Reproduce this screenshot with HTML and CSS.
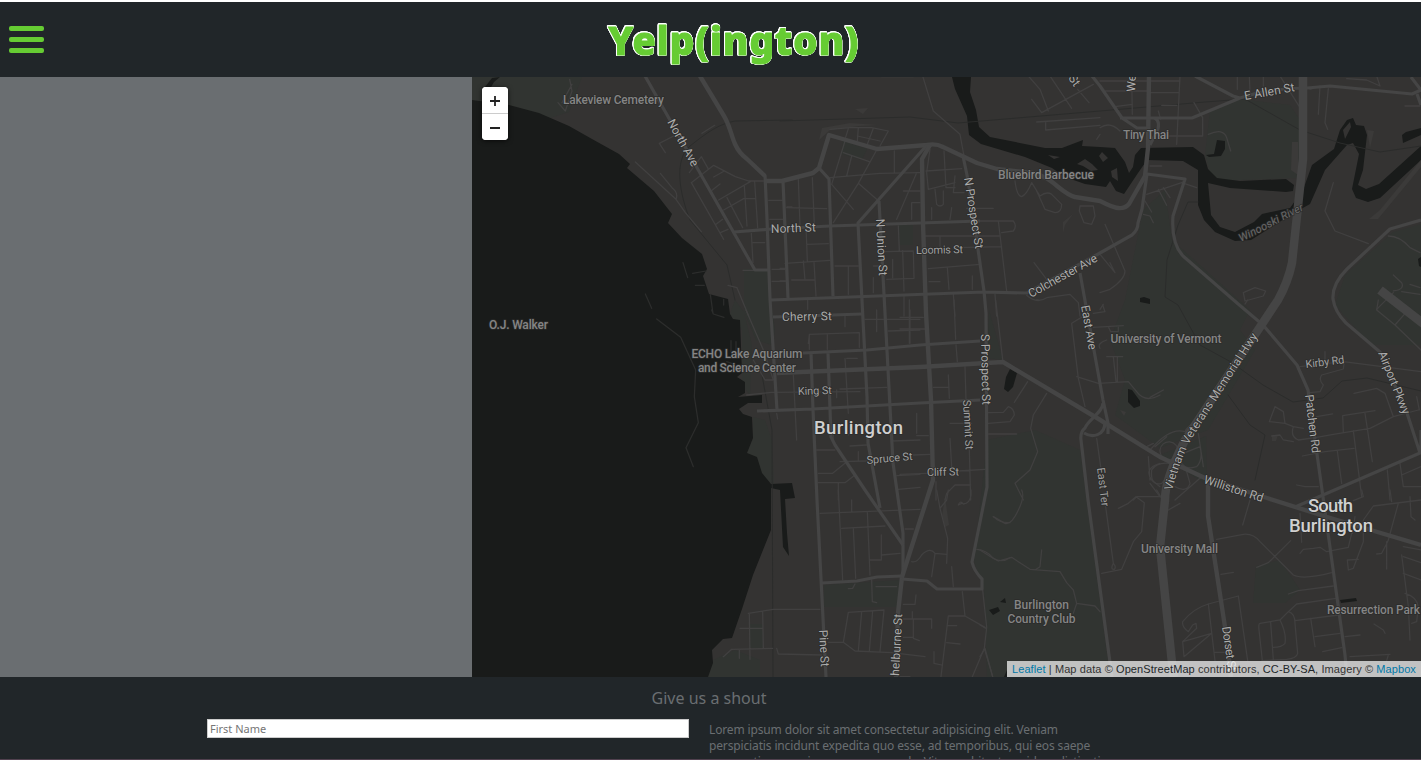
FILE: index.html
```
<!DOCTYPE html>
<html lang="en">
<head>
<meta charset="utf-8">
<title>Yelp(ington)</title>
<link rel="stylesheet" href="styles.css">
</head>
<body>
<header class="topbar">
  <button class="menu" aria-label="Menu"><span></span><span></span><span></span></button>
  <svg class="logo" viewBox="0 0 270 60" role="img"><text x="8.5" y="41" textLength="250" lengthAdjust="spacing">Yelp(ington)</text></svg>
</header>
<main class="content">
  <aside class="results"></aside>
  <section class="map">
    <svg class="tiles" viewBox="472 77 949 600">
      <defs><path id="hwy-label" d="M1172 491C1177 472 1184 450 1196 432L1262 330"/></defs>
      <rect class="land" x="472" y="77" width="949" height="600"/>
      <g class="park">
        <path d="M472 77H582L569 112 550 118 509 105 472 102ZM744 269H769L771 300 775 330 772 345 756 340 744 312ZM735 300L744 312 752 345 750 395 742 385 742 330 730 314ZM753 417L765 420 772 440 774 484 760 478 747 453 753 438Z"/>
        <path d="M1210 110L1238 99 1290 105 1300 120 1298 178 1212 181 1205 155ZM1143 210L1165 190 1172 240 1250 310 1240 330 1255 350 1208 430 1160 448 1115 415 1125 380 1110 340 1125 300Z"/>
        <path d="M987 440L1035 430 1080 450 1110 677H987L984 590 974 562ZM989 310L1003 360 987 358ZM824 585L900 580 897 607H824ZM1256 566L1280 560 1300 590 1285 603H1253ZM1345 275L1393 232 1421 224V345H1370L1335 305ZM1160 455L1206 436 1207 485ZM843 141L867 149 862 160 841 154ZM898 225H913V245H900ZM749 624H763V648H750ZM708 677L713 660 735 650 760 660V677Z"/>
      </g>
      <g class="water">
        <path d="M472 100L509 105 539 113 569 126 592 139 619 154 630 164 627 168 654 191 672 214 668 223 682 238 702 254 707 269 703 276 709 294 728 299 730 314 733 319 740 320 742 373 737 377 745 382 745 393 738 397 762 395 762 403 748 403 739 409 743 414 752 417 753 438 747 453 757 457 762 473 771 484V530L753 575 742 609 732 638 723 639 712 650 713 663 708 677H472Z"/>
        <path d="M771 484L792 483 795 498 785 499 787 533 789 556 783 547 780 490 771 488ZM485 87L492 78 500 77 494 82 490 89Z"/>
        <path d="M952 77H971L970 92 976 110 979 127 990 137 1045 148 1062 148 1083 140 1082 146 1100 147 1115 148 1125 162 1129 173 1133 167 1135 155 1141 148 1193 147 1204 155 1208 169 1217 178 1240 181 1286 179 1294 185 1293 191 1286 192 1230 188 1208 183 1211 215 1220 227 1235 232 1254 222 1262 214 1290 208 1303 190 1312 165 1334 149 1340 130 1347 120 1353 118 1356 125 1364 126 1367 135 1363 170 1358 185 1366 189 1379 184 1421 146V160L1380 198 1368 202 1356 198 1352 189 1359 154 1353 143 1347 145 1325 170 1310 204 1292 214 1251 240 1235 241 1215 232 1204 220 1198 205V170L1183 161 1147 160 1138 173 1124 194 1116 191 1110 181 1106 187 1085 184 1065 177 1052 168 1025 157 981 144 969 135 967 116 955 89Z"/>
        <path d="M1206 155L1214 154 1217 140 1225 141 1225 149 1221 156 1209 157ZM1402 135L1406 132 1421 128V135L1403 143ZM1140 298L1144 297 1150 299 1150 304 1140 302ZM1006 377L1010 369 1017 373 1013 387 1008 392 1004 389ZM1128 389L1132 390 1140 401 1140 406 1134 408 1128 402ZM989 610L998 607 1000 611 993 615ZM1000 602L1005 598 1006 603ZM1340 600L1356 598 1357 601 1341 603ZM1004 677L1007 670V677ZM1421 257L1418 259 1419 266 1421 267Z"/>
      </g>
      <g class="island"><path d="M1048 155L1060 157 1054 159ZM1077 164L1085 159 1092 164 1098 170 1091 171 1083 166ZM1343 130L1350 122 1351 127 1345 139ZM1102 152L1108 158 1103 162 1099 156ZM1111 171L1117 168 1118 181 1112 177Z"/></g>
      <g class="block"><path d="M1380 210L1421 160V167L1378 219 1369 219ZM1292 142H1298V175L1291 170ZM819 140L822 128 850 123 878 125 859 126 830 130ZM855 109L868 108 863 114ZM945 497L949 525 945 527 942 516ZM1120 410L1126 412 1124 416ZM1063 222L1073 214 1065 225 1063 233ZM1367 130L1374 131 1370 148ZM1272 435H1278L1276 441H1272Z"/></g>
      <g class="trace">
        <path d="M780 121L910 117 958 123 1100 111 1205 102 1245 99 1300 130 1340 143 1380 152 1421 146M690 146C710 130 720 124 735 121L792 120M690 146C673 160 680 195 690 220L727 265 735 300M762 375L772 430 773 677M1198 202L1188 202 1178 225 1167 260 1165 297 1178 305 1200 345 1220 356 1231 362 1263 385 1293 402 1323 398 1342 381 1367 378 1421 391M1228 395L1250 425 1265 435 1255 480"/>
      </g>
      <!-- Residential streets, one group per district, drawn on a 3x grid -->
      <g class="minor" transform="translate(472 76) scale(.33333)">
        <path d="M293 10L300 45 280 105 258 80M300 25L270 80M490 258L612 370Q620 350 600 335L565 292M612 370L640 410 688 467M605 180L562 202 580 230M658 320L755 490M658 320L725 268 790 302 830 315H875M652 290L688 242 708 277M725 303L757 285M720 343L744 324M740 372L835 317M755 402L815 368M765 365L812 455M690 172L728 148M817 330L825 450M848 318L857 455M815 368H850M732 445L752 430M745 470L768 460M838 472L843 560M843 500H878M813 583H850M768 628L795 635 830 720M890 373H930M893 430H935M900 580H938M900 616H940M945 393H960"/>
      </g>
      <g class="minor" transform="translate(780 76) scale(.33333)">
        <path d="M428 0L460 105 540 175 552 240M150 160L210 155 275 155 325 165 300 210M205 158L195 190M235 155L232 195M280 157L262 205M232 180L300 195M195 195L155 325 220 400M190 230L268 257M215 240L200 300M290 222L235 322 160 440M235 322L290 370M343 225V290M150 305L300 292 420 290M410 290L350 430M55 310L60 450M97 305L103 447M20 395L140 398M78 450L82 555M82 505L145 503M15 562L150 553M70 555L75 612M102 558L108 660M35 612H105M0 577H18M0 615H20M165 570H235M205 570V655M395 430V380H420M370 345H420M450 220L440 290 445 340 525 320M492 225L498 335H525M525 300L520 350H552M438 285L545 278M465 340L470 385Q480 395 490 385V345M515 395L510 430M455 395V430M640 397H560M435 480H660M480 480V510M600 435H700Q712 450 700 465L665 470M655 435L680 645M530 515L665 512M445 578L600 565M502 575L507 640M447 617H480M577 600V640M315 527L400 525 402 607 320 610M368 525L372 645M355 450L358 525M338 550V605M280 570H310M280 605V650M83 665V700M372 660V720M520 655L525 720M645 655L650 720M762 560L800 610M705 315Q710 360 725 362 740 355 755 320M755 320L780 360Q800 345 815 355L845 385Q845 410 825 410L795 400 770 345M900 390H940L945 420 935 445 912 440 898 405ZM740 658Q770 685 800 665L870 655 895 680 900 720M745 0L780 40 805 105M755 70L785 110 940 25M810 0L875 97M893 40L927 80M770 138L960 125M797 138V162L960 148M950 190L960 175M305 2H400"/>
      </g>
      <g class="minor" transform="translate(1100 76) scale(.33333)">
        <path d="M0 15H145M15 45H145M95 0L97 115M45 92L97 85M240 0L230 205M145 15L240 15M150 50L235 50M185 88H230M182 180H308V125L282 80M175 105L182 130M0 155Q30 135 60 165M412 0V40M448 0L450 50M490 0V30M540 0L600 95M630 40L660 30 655 115M685 38L675 140 683 160M325 175Q370 155 380 185L392 225M740 8L800 12 840 30 830 0M915 90H960M150 270H185M140 355L245 320 290 335M175 340L200 388M190 335L210 365M135 375L155 408M130 415L150 420 160 440M15 445L75 585Q75 610 30 640L0 650M0 535L45 590 30 560M700 320L675 405 705 465 805 503M865 480Q900 480 930 515L960 530M430 650L465 635 497 645 490 660 435 675ZM880 597L905 620Q915 640 880 645M930 625L960 635M830 700L880 650M905 647L960 655M0 700L10 685"/>
      </g>
      <g class="minor" transform="translate(600 310) scale(.33333)">
        <path d="M438 0L490 120 520 210H495L460 150M440 255L515 247 780 245M628 118V73L778 68V112M682 72V118M628 75L625 100M735 15V50M735 145L745 310M740 145H772M795 28H960M830 0V65M930 0V100M865 63L960 60M580 195L590 390M710 240V263M720 237L860 232M530 310L533 327M650 420H705M655 490H698L735 460M720 455L800 453M655 518H735L765 495M715 518V570M750 408L800 405M775 425V450M875 393L960 390M890 497L960 493M895 538L960 532M950 310V370M700 375V395M745 375L755 365"/>
      </g>
      <g class="minor pier" transform="translate(600 310) scale(.33333)">
        <path d="M170 27L242 82 287 180 283 260 295 338 258 413 280 470M335 0L340 12 372 22M393 92V125M408 95V120M380 155L395 160M136 -48L155 -5M249 -142L263 -97M278 -110L318 -117M286 -74H313M331 -47L339 10M371 -32V-15"/>
      </g>
      <g class="minor" transform="translate(900 300) scale(.33333)">
        <path d="M0 52H70M0 87H75M28 0V130M162 0L167 118M168 135L172 185M195 200L198 300M145 225L148 295M100 262H145M287 0L308 178M265 338L310 337 325 320Q342 325 343 345L330 365 265 370M150 370H215M265 402H350M50 407H85M150 415L155 500M40 465L90 463M0 523L80 520M175 513L255 508M208 450L212 600M212 555H165L140 580 135 600M108 545V600M383 245L343 307M440 280L400 345 392 385 413 455 390 510 345 550 370 600M410 0H415M548 50L515 70 535 235 555 320M530 230L595 250 685 245 710 275Q735 310 780 285M580 40L615 35 608 15M580 82L670 77M625 80L632 95H655V82M600 145Q590 130 620 120M620 170H668M640 170L648 245M652 170V245M590 415L602 500M700 600L710 590 780 590M740 440L760 430M780 490Q730 505 755 540L780 560M745 470L750 540"/>
      </g>
      <g class="minor" transform="translate(1150 300) scale(.33333)">
        <path d="M0 292L40 270M450 200L580 185 813 215M525 155V180M582 190L580 207 515 225Q505 240 520 255L510 275 480 278M612 280L680 265 705 280 730 350 660 385 550 403 500 412 445 420Q420 410 430 380M500 350L548 342M430 380L405 370 400 335 375 320 358 365 405 370M430 380L460 385M365 408L390 405 400 420 430 425M580 395L578 347 675 332M645 340L667 485M610 392L635 590M562 453L575 550M457 468L525 455 612 445M440 555L465 560 505 560M730 350L805 330M800 290L808 330M712 510L720 600M750 490L760 560H813M755 525L813 500M685 0L680 30 735 75 770 35M735 75L813 150M0 450Q60 380 105 395 110 380 140 365M30 450A27 27 0 1 1 84 455 27 27 0 1 1 30 450M5 510Q20 485 60 490L65 515 35 550Q0 560 5 510M100 460L150 440Q160 480 140 500 110 510 95 490M75 560Q110 580 120 550L110 515M75 600L155 530M145 400L160 500M0 550L30 590M15 440L50 410M285 12L293 0"/>
      </g>
      <g class="minor" transform="translate(680 490) scale(.33333)">
        <path d="M475 0L488 270M420 70L720 58M515 30V65M562 65L570 255M485 115L615 108M520 115L527 265M604 135V210H570M605 195L660 190M675 117H700M695 215Q710 220 725 195 750 170 765 190L800 193M765 190L755 260M770 0L780 55 803 145 800 220M780 55L800 30 805 0M845 40L835 45Q840 30 850 42 870 40 873 15V0M815 230L820 290M890 178Q920 180 940 205 965 220 990 203M940 80Q960 100 990 98M525 282L518 295 505 296M575 270L577 335 590 338M588 290H650M205 370L280 358H420M208 370L210 508M248 365L250 475M180 415H248M130 500L155 478 278 475M178 478V505M290 475L295 492 425 495M445 457H490L525 483 635 488 735 500M505 367L612 360 600 485M505 367L490 457M545 365L535 483M578 363L568 485M670 343H705L708 315M697 365V387M670 387H755V415M700 387V445L718 452M670 442H700M803 407H830M847 305L855 378H805L783 560M855 378L915 412M908 300L920 412 913 475 938 560M913 475L877 560M800 458L840 462M762 485V520L785 525M660 560H690"/>
      </g>
      <g class="minor" transform="translate(980 490) scale(.33333)">
        <path d="M125 0Q135 20 115 60 95 105 75 100L40 80M0 180Q30 200 55 213L95 202 150 238 240 245 260 278 280 300 290 340 345 348 360 365M290 340L280 370M185 180L180 230 165 240M377 50L400 220M400 220Q390 240 403 238 410 230 400 220M415 55L445 40 468 20 493 38 485 125 460 155 425 238 365 250M530 0L545 25M600 40L565 60M0 405L18 415M0 500L15 475 38 560"/>
      </g>
      <g class="minor" transform="translate(1170 490) scale(.33333)">
        <path d="M240 30L218 105M140 148L220 133Q250 130 270 155L370 255Q400 270 485 248M260 232L295 218 362 152M153 253L190 247M355 312L385 302 490 288M498 325L380 342 355 365 330 390 270 400Q265 400 267 420L277 512M355 365Q375 370 375 400L383 490Q380 505 350 508L275 512M330 390Q350 430 345 460 335 472 310 472M302 398L310 510M375 392L505 375M422 385L435 470M435 440L510 430M525 440L570 435M458 485L515 473M540 500L660 493M655 495L650 512M612 402L640 420 645 430M42 500L38 455 125 430M38 455L80 415 78 400 68 405 55 425Q35 410 38 395 70 355 115 342L205 318 233 512M115 342L135 512M42 500L125 430M135 487H165M390 190L400 178 430 175 450 172 470 185 535 172 545 130M547 130L555 80M575 0L580 20 550 32M390 70L395 157M753 30L610 48 580 90 580 155 550 235 535 240 532 210 565 208M685 40L655 150 648 165 635 190 620 192M650 155V237M660 0L665 35M720 20L723 80 735 90M700 170L753 180M695 195L715 350 720 450M700 200L753 218M700 250L753 270M705 310Q740 320 745 350L740 395 725 400"/>
      </g>
      <g class="major">
        <path d="M645 76L734 233 755 270H769M734 232L772 229 830 226 980 221"/>
        <path class="wide" d="M700 76L724 116C730 126 731 135 735 144S743 156 747 159L765 176"/>
        <path d="M765 175L767 219 770 299 777 410"/>
        <path class="wide" d="M765 181H782L813 173 819 168 829 135 877 149 927 145Q936 143 943 147L977 163 997 169 1032 173C1052 176 1060 193 1075 197L1100 201C1112 207 1122 212 1129 204L1145 176 1148 148 1149 76"/>
        <path d="M783 181L788 298M819 168L829 179 833 296M927 145L858 223 867 397 868 443 880 508M879 201L885 313 890 407 893 463 903 533 903 573"/>
        <path class="wide" d="M930 145L922 159 923 223 926 313 931 400 933 480 902 577 898 613 896 677"/>
        <path d="M963 156L968 180 984 291 986 313 987 487 972 562Q974 571 982 579V589H937L927 581 902 579M771 300L984 292 1027 293 1100 253 1132 235Q1138 230 1138 223L1142 209 1147 174 1185 179 1173 216Q1171 243 1183 256L1237 303 1263 325 1297 365 1308 390 1323 497 1345 655 1347 677M773 317L862 314M803 353L867 350 920 345 980 341M777 373L920 367 1003 362M757 411L813 409 920 403 980 400M811 353L813 410 817 500 826 677M828 353L831 437 835 445 865 490 903 545M822 583L857 581 877 577 902 576"/>
        <path class="wide" d="M777 373L920 367 1003 362 1097 418 1160 457 1205 478 1267 498 1327 517 1421 545"/>
        <path d="M1080 273L1103 400 1108 423V434M1103 403C1103 412 1088 420 1085 428Q1080 432 1081 440L1088 500 1112 677M1084 433C1092 438 1105 436 1105 422"/>
        <path class="wide" d="M1208 483L1208 516 1225 627 1231 677"/>
        <path d="M1195 76L1233 96 1240 98 1192 118H1120M1240 98Q1270 88 1307 88L1330 86 1412 94 1421 90M1421 105L1417 94M1100 86L1122 118 1137 128H1150M1147 118H1154Q1160 120 1158 129L1150 145M1411 77L1421 90M1421 220L1390 229 1347 269Q1332 284 1333 299 1335 312 1346 323L1380 352 1407 413 1420 453 1323 495 1295 507M1421 453V430M1092 76L1100 86"/>
        <path class="highway" d="M1303 76V159L1292 263Q1288 282 1278 300L1185 440C1171 468 1165 485 1165 500L1160 547 1172 663 1174 677"/>
        <path class="runway" d="M1380 290L1425 325"/>
      </g>
      <g class="poi">
        <text x="563" y="104" textLength="101">Lakeview Cemetery</text>
        <text x="1123" y="139" textLength="46">Tiny Thai</text>
        <text x="998" y="179" textLength="96">Bluebird Barbecue</text>
        <text x="489" y="329" textLength="59">O.J. Walker</text>
        <text x="691.5" y="357.5" textLength="111">ECHO Lake Aquarium</text>
        <text x="698" y="372" textLength="98">and Science Center</text>
        <text x="1110.5" y="343" textLength="111">University of Vermont</text>
        <text x="1141" y="552.5" textLength="77">University Mall</text>
        <text x="1014" y="608.5" textLength="55">Burlington</text>
        <text x="1007.5" y="623" textLength="68">Country Club</text>
        <text x="1327" y="614" textLength="93">Resurrection Park</text>
        <text class="river" transform="translate(1241 242) rotate(-27)" textLength="71">Winooski River</text>
      </g>
      <g class="street">
        <text transform="translate(667 122) rotate(61)" textLength="52">North Ave</text>
        <text transform="translate(771 233) rotate(-2)" textLength="45">North St</text>
        <text transform="translate(876 219) rotate(87)" textLength="57">N Union St</text>
        <text class="small" transform="translate(916 254) rotate(-1)" textLength="47">Loomis St</text>
        <text transform="translate(964 178) rotate(81)" textLength="72">N Prospect St</text>
        <text transform="translate(1031 298) rotate(-29)" textLength="77">Colchester Ave</text>
        <text transform="translate(1081 306) rotate(80)" textLength="45">East Ave</text>
        <text transform="translate(782 321) rotate(-1)" textLength="50">Cherry St</text>
        <text class="small" transform="translate(798 395) rotate(-2)" textLength="34">King St</text>
        <text transform="translate(981 334) rotate(89)" textLength="71">S Prospect St</text>
        <text class="small" transform="translate(963 400) rotate(87)" textLength="50">Summit St</text>
        <text class="small" transform="translate(867 464) rotate(-5)" textLength="46">Spruce St</text>
        <text class="small" transform="translate(927 476) rotate(-1)" textLength="32">Cliff St</text>
        <text class="small" transform="translate(1097 468) rotate(83)" textLength="39">East Ter</text>
        <text class="hwy"><textPath href="#hwy-label">Vietnam Veterans Memorial Hwy</textPath></text>
        <text transform="translate(1203 483) rotate(18)" textLength="62">Williston Rd</text>
        <text class="small" transform="translate(1306 368) rotate(-7)" textLength="39">Kirby Rd</text>
        <text transform="translate(1378 353) rotate(68)" textLength="67">Airport Pkwy</text>
        <text transform="translate(1305 395) rotate(83)" textLength="59">Patchen Rd</text>
        <text transform="translate(1245 100) rotate(-10)" textLength="51">E Allen St</text>
        <text transform="translate(1135 92) rotate(-87)">We</text>
        <text transform="translate(1068 78) rotate(56)">St</text>
        <text transform="translate(819 630) rotate(87)" textLength="37">Pine St</text>
        <text transform="translate(899 676) rotate(-87)" textLength="62">helburne St</text>
        <text transform="translate(1222 627) rotate(82)" textLength="45">Dorset St</text>
      </g>
      <g class="city">
        <text x="814" y="434" textLength="89">Burlington</text>
        <text x="1308" y="512" textLength="45">South</text>
        <text x="1289" y="532" textLength="84">Burlington</text>
      </g>
    </svg>
    <div class="zoom"><button>
      <svg viewBox="0 0 26 26"><path d="M8 14H18M13 9V19"/></svg></button><button>
      <svg viewBox="0 0 26 26"><path d="M8 14H18"/></svg></button></div>
    <div class="attribution"><a>Leaflet</a> | Map data © <span>OpenStreetMap</span> contributors, <span>CC-BY-SA</span>, Imagery © <a>Mapbox</a></div>
  </section>
</main>
<footer class="contact">
  <h2>Give us a shout</h2>
  <div class="columns">
    <form><input type="text" placeholder="First Name"></form>
    <p>Lorem ipsum dolor sit amet consectetur adipisicing elit. Veniam<br>perspiciatis incidunt expedita quo esse, ad temporibus, qui eos saepe<br>praesentium possimus vero quo unde. Vitae architecto quidem distinctio</p>
  </div>
</footer>
</body>
</html>
```
FILE: styles.css
```
* { box-sizing: border-box; }
html, body { height: 100%; }
body {
  margin: 0;
  height: 760px;
  overflow: hidden;
  display: flex;
  flex-direction: column;
  border-top: 2px solid #fff;
  background: #212629;
  font-family: "Noto Sans", sans-serif;
}
.topbar {
  flex: 0 0 75px;
  display: grid;
  grid-template-columns: 600px 270px 1fr;
  background: #212629;
}
.menu {
  display: flex;
  flex-direction: column;
  gap: 6px;
  width: 44px;
  padding: 24px 0 0 9px;
  border: 0;
  background: none;
}
.menu span { height: 5px; width: 35px; border-radius: 2px; background: #66cc33; }
.logo { width: 270px; height: 60px; margin-top: 12px; overflow: visible; }
.logo text {
  font: 800 38.5px "Noto Sans", sans-serif;
  fill: #66cc33;
  stroke: #66cc33;
  stroke-width: 1.2;
  stroke-linejoin: round;
  filter: drop-shadow(.7px 0 0 #fff) drop-shadow(-.7px 0 0 #fff) drop-shadow(0 .7px 0 #fff) drop-shadow(0 -.7px 0 #fff);
}
.content { flex: 0 0 600px; display: flex; }
.results { width: 472px; background: #6a6e71; }
.map { position: relative; flex: 1; overflow: hidden; }
.tiles { display: block; width: 949px; height: 600px; }
.land, .island { fill: #343332; }
.park { fill: #313431; }
.water { fill: #191b1a; }
.block { fill: #3b3a39; }
.trace, .minor, .major { fill: none; stroke-linejoin: round; stroke-linecap: round; }
.trace { stroke: #2b2c2b; stroke-width: 1; }
.minor { stroke: #414040; stroke-width: 3.8; }
.pier { stroke: #2c2d2c; }
.major { stroke: #454545; stroke-width: 3.2; stroke-linecap: butt; }
.major .wide { stroke-width: 4.4; }
.major .highway { stroke-width: 8.5; }
.major .runway { stroke-width: 9; }
.tiles text {
  font-family: Roboto, sans-serif;
  paint-order: stroke;
  stroke: #2b2b2a;
  stroke-width: 1.5px;
  stroke-linejoin: round;
}
.poi text { font-size: 12px; font-weight: 500; fill: #858585; }
.poi .river { font-size: 11px; font-weight: 400; font-style: italic; fill: #686868; }
.street text { font-size: 12px; fill: #ababab; }
.street .small { font-size: 11px; fill: #a0a0a0; }
.street .hwy { letter-spacing: .12px; }
.city text { font-size: 18.5px; font-weight: 500; fill: #d0d0d0; }
.zoom {
  position: absolute;
  left: 10px;
  top: 10px;
  width: 26px;
  border-radius: 4px;
  overflow: hidden;
  background: #fff;
  box-shadow: 0 1px 5px rgba(0, 0, 0, .65);
}
.zoom button { display: block; width: 26px; height: 26px; padding: 0; border: 0; background: #fff; }
.zoom button:first-child { height: 27px; border-bottom: 1px solid #ccc; }
.zoom svg { display: block; width: 26px; height: 26px; fill: none; stroke: #222; stroke-width: 1.8; }
.attribution {
  position: absolute;
  right: 0;
  bottom: 0;
  width: 414px;
  height: 16px;
  padding: 0 5px;
  background: rgba(255, 255, 255, .7);
  color: #333;
  font: 11px/16px "Liberation Sans", Arial, sans-serif;
  letter-spacing: .09px;
  white-space: nowrap;
}
.attribution a { color: #0078a8; }
.attribution span { color: #212629; }
.contact { flex: 1; overflow: hidden; color: #6a6e71; border-bottom: 1px solid #51414f; }
.contact h2 { margin: 9px 0 0; padding-right: 3px; text-align: center; font-size: 16px; line-height: 24px; font-weight: 400; }
.columns { display: grid; grid-template-columns: 482px 420px; gap: 20px; padding: 9px 0 0 207px; }
.columns input {
  display: block;
  width: 482px;
  height: 19px;
  padding: 1px 2px;
  border: 1px solid #ccc;
  background: #fff;
  font: 11px "Noto Sans", sans-serif;
}
.columns input::placeholder { color: #757575; }
.columns p { margin: 3px 0 0; font-size: 12px; letter-spacing: -.14px; line-height: 16px; white-space: nowrap; }
```
